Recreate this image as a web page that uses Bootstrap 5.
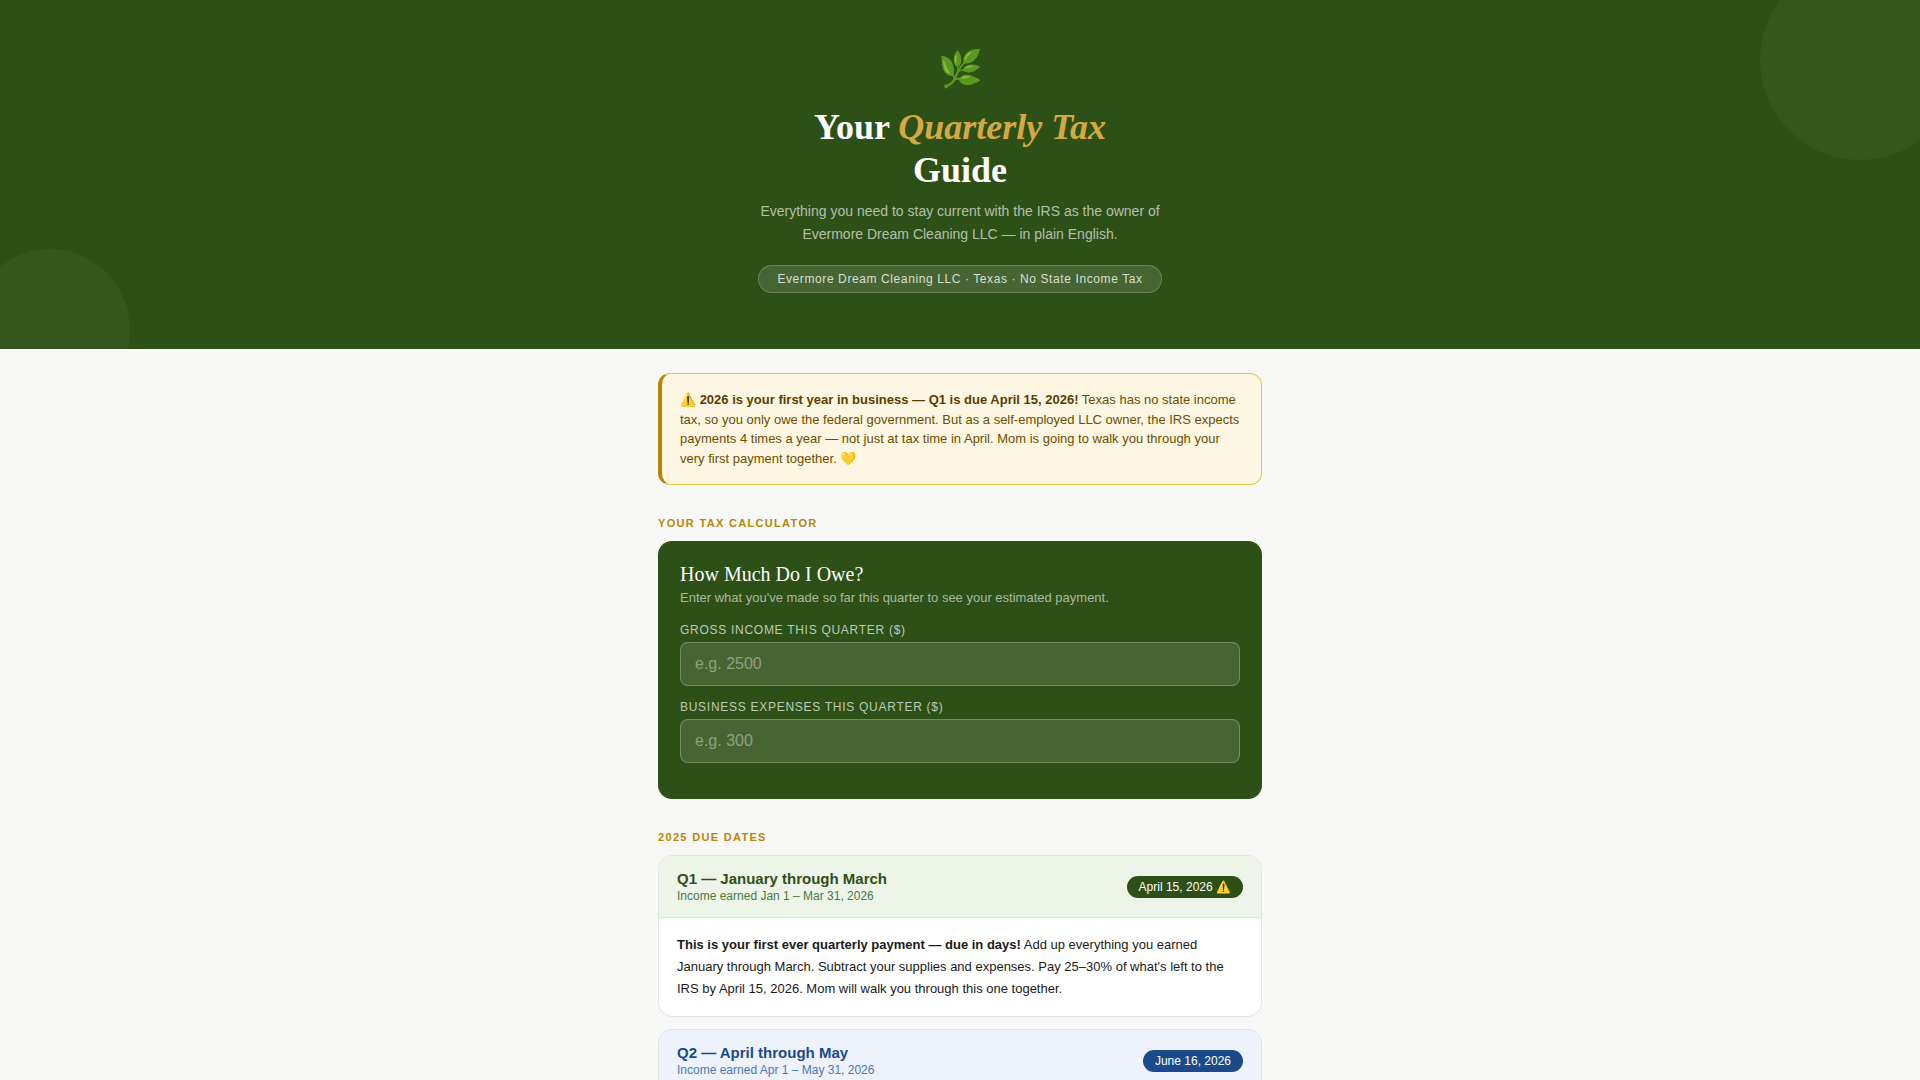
<!DOCTYPE html>
<html lang="en">
<head>
<meta charset="utf-8">
<meta name="viewport" content="width=device-width, initial-scale=1">
<title>Your Quarterly Tax Guide</title>
<link href="https://cdn.jsdelivr.net/npm/bootstrap@5.3.0/dist/css/bootstrap.min.css" rel="stylesheet">
<style>
  :root { --forest: #2d5016; --gold: #b8860b; }
  body { background: #f8f8f6; color: #1a1a1a; font-family: "Liberation Sans", Arial, sans-serif; font-size: 13px; line-height: 1.5; }
  .serif { font-family: "Liberation Serif", "Times New Roman", serif; }

  /* Hero */
  .hero { background: var(--forest); padding: 40px 24px 56px; }
  .hero::before, .hero::after { content: ""; position: absolute; border-radius: 50%; background: rgba(255, 255, 255, .04); }
  .hero::before { width: 200px; height: 200px; top: -40px; right: -40px; }
  .hero::after { width: 160px; height: 160px; bottom: -60px; left: -30px; }
  .hero-icon { font-size: 36px; line-height: 58px; margin-bottom: 8px; }
  .hero h1 { font-size: 36px; line-height: 43px; max-width: 420px; margin-bottom: 8px; }
  .hero h1 em { color: #d4a843; }
  .hero-sub { font-size: 14px; line-height: 23px; max-width: 420px; color: rgba(255, 255, 255, .65); margin-bottom: 19px; }
  .hero-tag { font-size: 12px; line-height: 16px; letter-spacing: .05em; padding: 5px 18px; color: rgba(255, 255, 255, .8); background: rgba(255, 255, 255, .12); border: 1px solid rgba(255, 255, 255, .2); }

  .page { max-width: 640px; padding: 24px 18px; }
  .notice { background: #fdf6e3; color: #6b4e00; border: 1px solid #e0c84a; border-left: 4px solid var(--gold); border-radius: 12px; padding: 16px 18px; margin-bottom: 30px; }
  .notice strong { color: #5a3e00; }
  .section-label { font-size: 11px; line-height: 16px; font-weight: 700; letter-spacing: .12em; color: var(--gold); margin-bottom: 10px; }

  /* Calculator */
  .calc { background: var(--forest); border-radius: 14px; padding: 22px; margin-bottom: 30px; }
  .calc h2 { font-size: 20px; line-height: 23px; font-weight: 400; margin-bottom: 4px; }
  .calc-sub { line-height: 15px; color: rgba(255, 255, 255, .6); margin-bottom: 18px; }
  .calc label { font-size: 12px; line-height: 14px; letter-spacing: .06em; color: rgba(255, 255, 255, .7); margin-bottom: 5px; }
  .calc .form-control { height: 44px; font-size: 16px; padding: 12px 14px; color: #fff; background: rgba(255, 255, 255, .12); border: 1px solid rgba(255, 255, 255, .25); border-radius: 8px; margin-bottom: 14px; }
  .calc .form-control::placeholder { color: rgba(255, 255, 255, .4); }

  /* Quarter cards */
  .quarter { border: 1px solid #e2e4e0; border-radius: 14px; margin-bottom: 12px; }
  .quarter-head { padding: 14px 18px; border-bottom: 1px solid #e2e4e0; }
  .quarter-head h3 { font-size: 15px; line-height: 17px; font-weight: 700; margin-bottom: 2px; }
  .quarter-head p { font-size: 12px; line-height: 14px; }
  .quarter-body { padding: 16px 18px; line-height: 22px; }
  .due { font-size: 12px; line-height: 14px; padding: 4px 12px; }
  .q-green .quarter-head { background: #edf4e8; color: var(--forest); }
  .q-green p { color: #4a7c3f; }
  .q-green .due { background: var(--forest); }
  .q-blue .quarter-head { background: #eef2fb; color: #1a4a8a; }
  .q-blue p { color: #4a7ab8; }
  .q-blue .due { background: #1a4a8a; }
</style>
<script src="https://cdn.jsdelivr.net/npm/bootstrap@5.3.0/dist/js/bootstrap.bundle.min.js" defer></script>
</head>
<body>
<header class="hero position-relative overflow-hidden d-flex flex-column align-items-center text-center">
  <div class="hero-icon">🌿</div>
  <h1 class="serif fw-bold text-white">Your <em>Quarterly Tax</em><br>Guide</h1>
  <p class="hero-sub">Everything you need to stay current with the IRS as the owner of Evermore Dream Cleaning LLC — in plain English.</p>
  <div class="hero-tag rounded-pill">Evermore Dream Cleaning LLC · Texas · No State Income Tax</div>
</header>

<main class="page container-fluid mx-auto">
  <div class="notice" role="note">⚠️ <strong>2026 is your first year in business — Q1 is due April 15, 2026!</strong> Texas has no state income tax, so you only owe the federal government. But as a self-employed LLC owner, the IRS expects payments 4 times a year — not just at tax time in April. Mom is going to walk you through your very first payment together. 💛</div>

  <div class="section-label text-uppercase">Your Tax Calculator</div>
  <form class="calc">
    <h2 class="serif text-white">How Much Do I Owe?</h2>
    <p class="calc-sub">Enter what you've made so far this quarter to see your estimated payment.</p>
    <label class="d-block text-uppercase" for="income">Gross income this quarter ($)</label>
    <input class="form-control" type="number" id="income" placeholder="e.g. 2500">
    <label class="d-block text-uppercase" for="expenses">Business expenses this quarter ($)</label>
    <input class="form-control" type="number" id="expenses" placeholder="e.g. 300">
  </form>

  <div class="section-label text-uppercase">2025 Due Dates</div>
  <section class="quarter q-green bg-white overflow-hidden">
    <div class="quarter-head d-flex justify-content-between align-items-center">
      <div>
        <h3>Q1 — January through March</h3>
        <p class="mb-0">Income earned Jan 1 – Mar 31, 2026</p>
      </div>
      <span class="due rounded-pill text-white text-nowrap">April 15, 2026 ⚠️</span>
    </div>
    <div class="quarter-body"><strong>This is your first ever quarterly payment — due in days!</strong> Add up everything you earned January through March. Subtract your supplies and expenses. Pay 25–30% of what's left to the IRS by April 15, 2026. Mom will walk you through this one together.</div>
  </section>
  <section class="quarter q-blue bg-white overflow-hidden">
    <div class="quarter-head d-flex justify-content-between align-items-center">
      <div>
        <h3>Q2 — April through May</h3>
        <p class="mb-0">Income earned Apr 1 – May 31, 2026</p>
      </div>
      <span class="due rounded-pill text-white text-nowrap">June 16, 2026</span>
    </div>
  </section>
</main>
</body>
</html>
